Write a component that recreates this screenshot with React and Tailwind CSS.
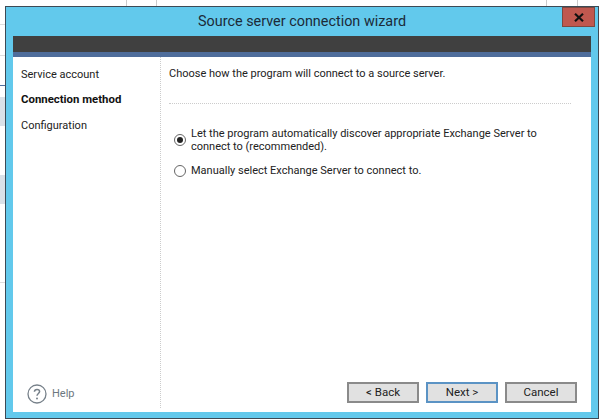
const font = "font-['Roboto','Liberation_Sans',sans-serif]";

function WizardButton({ label, active }) {
  return (
    <button
      className={`h-[21px] w-[72px] border-2 bg-[#e1e1e1] text-[11.5px] text-[#222] ${
        active ? "border-[#5b93c4]" : "border-[#8a8a8a]"
      }`}
    >
      {label}
    </button>
  );
}

function Radio({ checked }) {
  return (
    <span className="flex h-[12px] w-[12px] shrink-0 items-center justify-center rounded-full border border-[#666] bg-white">
      {checked && <span className="h-[6px] w-[6px] rounded-full bg-[#222]" />}
    </span>
  );
}

export default function App() {
  return (
    <div className={`relative h-[420px] w-[600px] overflow-hidden bg-white ${font}`}>
      {/* spreadsheet showing behind the dialog */}
      <div className="absolute left-0 top-[24px] h-px w-[5px] bg-[#ddd]" />
      <div className="absolute left-0 top-[55px] h-px w-[5px] bg-[#ddd]" />
      <div className="absolute left-0 top-[85px] h-px w-[5px] bg-[#4f6f9f]" />
      <div className="absolute left-0 top-[97px] h-[29px] w-[5px] bg-[#d9e1e8]" />
      <div className="absolute left-0 top-[175px] h-[29px] w-[5px] bg-[#d9e1e8]" />
      <div className="absolute left-0 top-[282px] h-px w-[5px] bg-[#ddd]" />
      <div className="absolute left-[126px] top-0 h-[6px] w-px bg-[#ccc]" />
      <div className="absolute left-[156px] top-0 h-[6px] w-px bg-[#ccc]" />
      <div className="absolute left-[546px] top-0 h-[6px] w-px bg-[#ccc]" />
      <div className="absolute left-[577px] top-0 h-[6px] w-px bg-[#ccc]" />

      <div className="ml-[5px] mt-[6px] flex h-[413px] w-[594px] flex-col border border-[#3d4a55] bg-[#62c9ec] px-[7px] pb-[6px]">
        <div className="relative flex h-[29px] shrink-0 items-center justify-center pt-[1px] text-[14.4px] text-[#1c2b38]">
          Source server connection wizard
          <div className="absolute right-[-4px] top-0 flex h-[20px] w-[33px] items-center justify-center border border-[#7e4840] bg-[#c0584f]">
            <svg width="10" height="9" viewBox="0 0 10 9" fill="none" stroke="#111" strokeWidth="2.2">
              <path d="M1 0.8 9 8.2M9 0.8 1 8.2" />
            </svg>
          </div>
        </div>
        <div className="h-[16px] shrink-0 bg-[#404040]" />
        <div className="h-[5px] shrink-0 bg-[#4f6d9b]" />
        <div className="flex min-h-0 flex-1 bg-white">
          <div className="flex w-[148px] shrink-0 flex-col pb-[4px]">
            <div className="flex flex-1 flex-col border-r border-dotted border-[#ccc] pb-[4px] pl-[8px] pt-[9px] text-[11px] text-[#222]">
              <div className="flex h-[19px] items-center">Service account</div>
              <div className="mt-[5px] flex h-[19px] items-center text-[11.4px] font-bold text-[#111]">Connection method</div>
              <div className="mt-[8px] flex h-[19px] items-center">Configuration</div>
              <div className="mt-auto flex items-center gap-[5px] pl-[6px] text-[#6d7780]">
                <svg width="20" height="20" viewBox="0 0 20 20" fill="none">
                  <circle cx="10" cy="10" r="9" stroke="#77818a" strokeWidth="1.3" />
                  <path d="M7.4 7.8C7.5 6.2 8.6 5.4 10 5.4c1.5 0 2.6.9 2.6 2.2 0 1.9-2.6 2-2.6 4.2" stroke="#77818a" strokeWidth="1.5" />
                  <circle cx="10" cy="14.4" r="1" fill="#77818a" />
                </svg>
                Help
              </div>
            </div>
          </div>
          <div className="flex min-w-0 flex-1 flex-col pl-[8px] pr-[14px] pt-[9px] text-[11px] leading-[13px] text-[#222]">
            <p className="mr-[6px] h-[37px] leading-[16px]">Choose how the program will connect to a source server.</p>
            <div className="mr-[6px] border-t border-dotted border-[#ccc]" />
            <div className="mt-[23px] flex items-center gap-[5px] pl-[5px]">
              <Radio checked />
              <span>
                Let the program automatically discover appropriate Exchange Server to
                <br />
                connect to (recommended).
              </span>
            </div>
            <div className="mt-[11px] flex items-center gap-[5px] pl-[5px]">
              <Radio />
              <span>Manually select Exchange Server to connect to.</span>
            </div>
            <div className="mb-[9px] mt-auto flex justify-end gap-[7px]">
              <WizardButton label="< Back" />
              <WizardButton label="Next >" active />
              <WizardButton label="Cancel" />
            </div>
          </div>
        </div>
      </div>
    </div>
  );
}
